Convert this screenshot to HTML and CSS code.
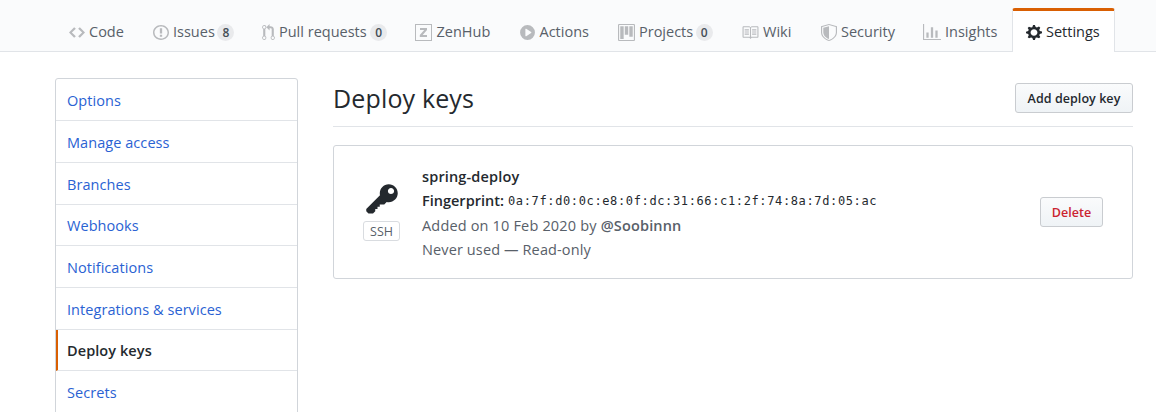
FILE: index.html
```html
<!DOCTYPE html>
<html lang="en">
<head>
<meta charset="utf-8">
<title>Deploy keys</title>
<link rel="stylesheet" href="styles.css">
</head>
<body>
<nav class="tabs">
  <a class="tab tab-code"><svg class="icon" width="16" height="17" viewBox="0 0 14 16" preserveAspectRatio="none"><path d="M9.5 3L8 4.5 11.5 8 8 11.5 9.5 13 14 8 9.5 3zm-5 0L0 8l4.5 5L6 11.5 2.5 8 6 4.5 4.5 3z"/></svg><span class="label">Code</span></a>
  <a class="tab tab-issues"><svg class="icon" width="16" height="17" viewBox="0 0 14 16" preserveAspectRatio="none"><path d="M7 2.3c3.14 0 5.7 2.56 5.7 5.7s-2.56 5.7-5.7 5.7A5.71 5.71 0 011.3 8c0-3.14 2.56-5.7 5.7-5.7zM7 1C3.14 1 0 4.14 0 8s3.14 7 7 7 7-3.14 7-7-3.14-7-7-7zm1 3H6v5h2V4zm0 6H6v2h2v-2z"/></svg><span class="label">Issues</span><span class="counter">8</span></a>
  <a class="tab tab-pulls"><svg class="icon" width="13" height="17" viewBox="0 0 12 16"><path d="M11 11.28V5c-.03-.78-.34-1.47-.94-2.06C9.46 2.35 8.78 2.03 8 2H7V0L4 3l3 3V4h1c.27.02.48.11.69.31.21.2.3.42.31.69v6.28A1.993 1.993 0 0010 15a1.993 1.993 0 001-3.72zm-1 2.92c-.66 0-1.2-.55-1.2-1.2 0-.65.55-1.2 1.2-1.2.65 0 1.2.55 1.2 1.2 0 .65-.55 1.2-1.2 1.2zM4 3c0-1.11-.89-2-2-2a1.993 1.993 0 00-1 3.72v6.56A1.993 1.993 0 002 15a1.993 1.993 0 001-3.72V4.72c.59-.34 1-.98 1-1.72zm-.8 10c0 .66-.55 1.2-1.2 1.2-.65 0-1.2-.55-1.2-1.2 0-.65.55-1.2 1.2-1.2.65 0 1.2.55 1.2 1.2zM2 4.2C1.34 4.2.8 3.65.8 3c0-.65.55-1.2 1.2-1.2.65 0 1.2.55 1.2 1.2 0 .65-.55 1.2-1.2 1.2z"/></svg><span class="label">Pull requests</span><span class="counter">0</span></a>
  <a class="tab tab-zenhub"><svg class="icon" width="17" height="17" viewBox="0 0 17 17"><path fill-rule="evenodd" d="M0 0h17v17H0zM1 1v15h15V1zM5 4h7v1.9L7.7 11H12v2H4.8v-1.9L9.2 6H5z"/></svg><span class="label">ZenHub</span></a>
  <a class="tab tab-actions"><svg class="icon" width="15" height="17" viewBox="0 0 14 16"><path d="M14 8A7 7 0 110 8a7 7 0 0114 0zm-8.223 3.482l4.599-3.066a.5.5 0 000-.832L5.777 4.518A.5.5 0 005 4.934v6.132a.5.5 0 00.777.416z"/></svg><span class="label">Actions</span></a>
  <a class="tab tab-projects"><svg class="icon" width="17" height="17" viewBox="0 0 15 16" preserveAspectRatio="none"><path d="M10 12h3V2h-3v10zm-4-2h3V2H6v8zm-4 4h3V2H2v12zm-1 1h13V1H1v14zM14 0H1a1 1 0 00-1 1v14a1 1 0 001 1h13a1 1 0 001-1V1a1 1 0 00-1-1z" fill-rule="evenodd"/></svg><span class="label">Projects</span><span class="counter">0</span></a>
  <a class="tab tab-wiki"><svg class="icon" width="17" height="17" viewBox="0.5 0 16 16"><path fill-rule="evenodd" d="M3 5h4v1H3V5zm0 3h4V7H3v1zm0 2h4V9H3v1zm11-5h-4v1h4V5zm0 2h-4v1h4V7zm0 2h-4v1h4V9zm2-6v9c0 .55-.45 1-1 1H9.5l-1 1-1-1H2c-.55 0-1-.45-1-1V3c0-.55.45-1 1-1h5.5l1 1 1-1H15c.55 0 1 .45 1 1zm-8 .5L7.5 3H2v9h6V3.5zm7-.5H9.5l-.5.5V12h6V3z"/></svg><span class="label">Wiki</span></a>
  <a class="tab tab-security"><svg class="icon" width="16" height="17" viewBox="0 0 14 16" preserveAspectRatio="none"><path fill-rule="evenodd" d="M0 2l7-2 7 2v6.02C14 12.69 8.69 16 7 16c-1.69 0-7-3.31-7-7.98V2zm1 .75L7 1l6 1.75v5.268C13 12.104 8.449 15 7 15c-1.449 0-6-2.896-6-6.982V2.75zm1 .75L7 2v12c-1.207 0-5-2.482-5-5.985V3.5z"/></svg><span class="label">Security</span></a>
  <a class="tab tab-insights"><svg class="icon" width="18" height="17" viewBox="0 0 16 16" preserveAspectRatio="none"><path d="M16 14v1H0V0h1v14h15zM5 13H3V8h2v5zm4 0H7V3h2v10zm4 0h-2V6h2v7z"/></svg><span class="label">Insights</span></a>
  <a class="tab tab-settings selected"><svg class="icon" width="16" height="17" viewBox="0 0 14 16" preserveAspectRatio="none"><path fill-rule="evenodd" d="M14 8.77v-1.6l-1.94-.64-.45-1.09.88-1.84-1.13-1.13-1.81.91-1.09-.45-.69-1.92h-1.6l-.63 1.94-1.11.45-1.84-.88-1.13 1.13.91 1.81-.45 1.09L0 7.23v1.59l1.94.64.45 1.09-.88 1.84 1.13 1.13 1.81-.91 1.09.45.69 1.92h1.59l.63-1.94 1.11-.45 1.84.88 1.13-1.13-.92-1.81.47-1.09L14 8.75v.02zM7 11c-1.66 0-3-1.34-3-3s1.34-3 3-3 3 1.34 3 3-1.34 3-3 3z"/></svg><span class="label">Settings</span></a>
</nav>
<main class="page">
  <aside class="menu">
    <a class="menu-item">Options</a>
    <a class="menu-item">Manage access</a>
    <a class="menu-item">Branches</a>
    <a class="menu-item short">Webhooks</a>
    <a class="menu-item">Notifications</a>
    <a class="menu-item">Integrations &amp; services</a>
    <a class="menu-item short current">Deploy keys</a>
    <a class="menu-item">Secrets</a>
  </aside>
  <section class="content">
    <header class="subhead">
      <h2 class="title">Deploy keys</h2>
      <button class="btn btn-add">Add deploy key</button>
    </header>
    <div class="card">
      <div class="key-type">
        <svg class="key" width="32" height="36" viewBox="0 0 14 16"><path d="M12.83 2.17C12.08 1.42 11.14 1.03 10 1c-1.13.03-2.08.42-2.83 1.17S6.04 3.86 6.01 5c0 .3.03.59.09.89L0 12v1l1 1h2l1-1v-1h1v-1h1v-1h2l1.09-1.11c.3.08.59.11.91.11 1.14-.03 2.08-.42 2.83-1.17S13.97 6.14 14 5c-.03-1.14-.42-2.08-1.17-2.83zM11 5.38c-.77 0-1.38-.61-1.38-1.38 0-.77.61-1.38 1.38-1.38.77 0 1.38.61 1.38 1.38 0 .77-.61 1.38-1.38 1.38z"/></svg>
        <span class="badge">SSH</span>
      </div>
      <div class="details">
        <div class="line name">spring-deploy</div>
        <div class="line"><span class="strong">Fingerprint:</span><code class="hash">0a:7f:d0:0c:e8:0f:dc:31:66:c1:2f:74:8a:7d:05:ac</code></div>
        <div class="line muted"><span class="added">Added on 10 Feb 2020 by</span><span class="user">@Soobinnn</span></div>
        <div class="line muted usage">Never used — Read-only</div>
      </div>
      <button class="btn btn-delete">Delete</button>
    </div>
  </section>
</main>
</body>
</html>
```
FILE: styles.css
```css
* { box-sizing: border-box; }
body {
  margin: 0;
  height: 412px;
  overflow: hidden;
  background: #fff;
  color: #24292e;
  font: 14.5px/24px "Open Sans", "Noto Sans", sans-serif;
}
.tabs {
  display: flex;
  height: 52px;
  padding: 8px 0 0 55px;
  background: #fafbfc;
  border-bottom: 1px solid #e1e4e8;
}
.tab {
  display: flex;
  flex: none;
  align-items: center;
  height: 44px;
  padding: 4px 0 0 14px;
  color: #586069;
  white-space: nowrap;
}
.icon { flex: none; margin-right: 4px; fill: #b8babd; }
.label { flex: none; }
.counter {
  width: 17px;
  height: 17px;
  margin-left: 2.5px;
  border-radius: 9px;
  background: #e9eaec;
  color: #444d56;
  font-size: 12px;
  font-weight: 600;
  line-height: 17px;
  text-align: center;
}
.tab-code { width: 84px; }
.tab-issues { width: 109px; }
.tab-pulls { width: 153px; }
.tab-pulls .counter { margin-left: 3.5px; }
.tab-zenhub { width: 105px; }
.tab-zenhub .icon { margin-right: 4.5px; }
.tab-actions { width: 98px; }
.tab-actions .icon { margin-right: 4.5px; }
.tab-projects { width: 124px; }
.tab-wiki { width: 79px; }
.tab-security { width: 102px; }
.tab-insights { width: 103px; }
.tab-settings { width: 103px; padding-left: 13px; }
.selected {
  padding-top: 1px;
  background: #fff;
  color: #24292e;
  border: 1px solid #e1e4e8;
  border-top: 3px solid #d95f02;
  border-bottom: 0;
  border-radius: 3px 3px 0 0;
}
.selected .icon { fill: #24292e; }
.page { display: flex; gap: 35px; padding: 26px 23px 0 55px; }
.menu {
  flex: none;
  width: 243px;
  height: 350px;
  border: 1px solid #d1d5da;
  border-radius: 3px;
}
.menu-item {
  display: flex;
  align-items: center;
  height: 42px;
  padding: 2px 0 0 11px;
  border-bottom: 1px solid #e1e4e8;
  color: #2a62d3;
  letter-spacing: 0.06px;
}
.menu-item.short { height: 41px; }
.menu-item.current {
  padding-left: 9px;
  border-left: 2px solid #d95f02;
  color: #24292e;
  font-weight: 600;
  letter-spacing: 0.08px;
}
.content { flex: 1; }
.subhead {
  display: flex;
  justify-content: space-between;
  height: 49px;
  border-bottom: 1px solid #e1e4e8;
}
.title { margin: 1px 0 0; font-size: 25px; font-weight: 400; line-height: 38px; letter-spacing: 0.15px; }
.btn {
  flex: none;
  height: 30px;
  padding: 1px 0 0;
  border: 1px solid #c9ccd0;
  border-radius: 3px;
  background: linear-gradient(#fafbfc, #eff3f6);
  color: #24292e;
  font: 600 12.5px/27px "Open Sans", sans-serif;
  letter-spacing: 0.06px;
  white-space: nowrap;
}
.btn-add { width: 118px; margin-top: 5px; }
.btn-delete { width: 63px; color: #cb2431; }
.card {
  display: flex;
  align-items: center;
  height: 134px;
  margin-top: 18px;
  padding: 0 29px;
  border: 1px solid #d1d5da;
  border-radius: 3px;
}
.key-type {
  display: flex;
  flex: none;
  flex-direction: column;
  align-items: center;
  width: 37px;
  padding-bottom: 2px;
}
.key { fill: #24292e; }
.badge {
  width: 37px;
  height: 20px;
  margin-top: 3px;
  border: 1px solid #d9dce0;
  border-radius: 3px;
  color: #586069;
  font-size: 12.5px;
  line-height: 19px;
  text-align: center;
}
.details { flex: 1; padding: 3px 0 0 22px; }
.line { display: flex; height: 24.4px; line-height: 24.4px; white-space: nowrap; }
.name, .strong, .user { font-weight: 600; letter-spacing: 0.15px; }
.strong { width: 82px; letter-spacing: 0; }
.hash { margin-left: 4px; font: 12px/25px "DejaVu Sans Mono", monospace; letter-spacing: 0.63px; }
.muted { color: #586069; }
.added { letter-spacing: 0.17px; }
.usage { letter-spacing: 0.12px; }
.user { margin-left: 4px; }
```
